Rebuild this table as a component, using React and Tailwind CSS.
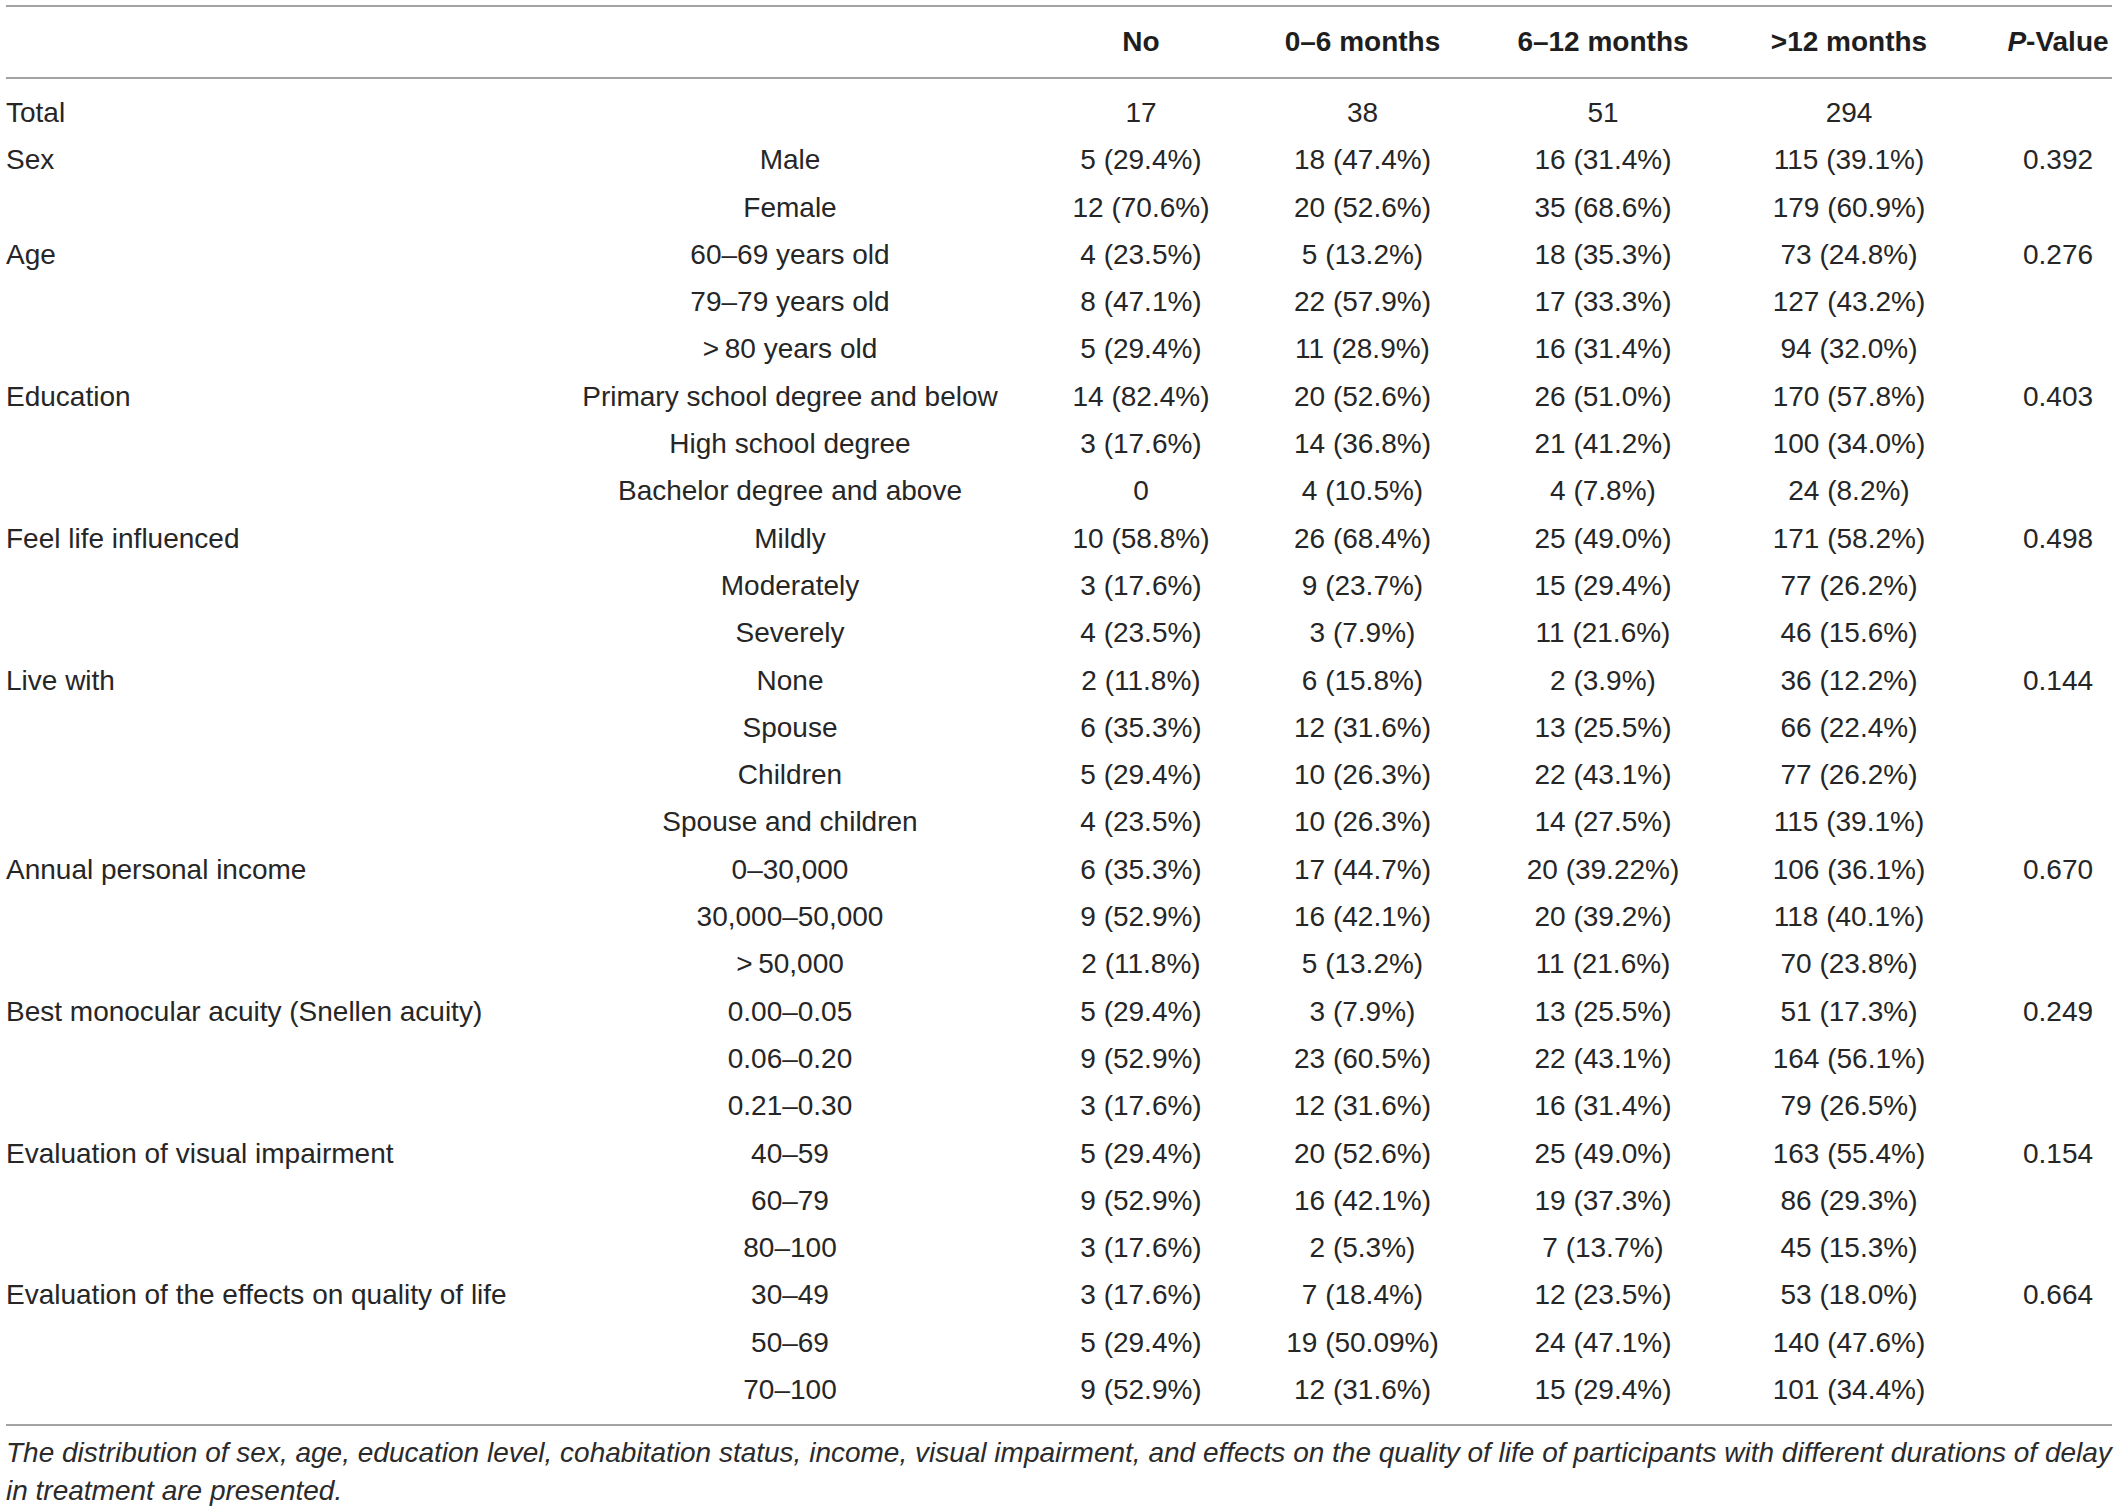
// App.jsx
import React from 'react';

const rows = [
    ['Total', '', '17', '38', '51', '294', ''],
    ['Sex', 'Male', '5 (29.4%)', '18 (47.4%)', '16 (31.4%)', '115 (39.1%)', '0.392'],
    ['', 'Female', '12 (70.6%)', '20 (52.6%)', '35 (68.6%)', '179 (60.9%)', ''],
    ['Age', '60–69 years old', '4 (23.5%)', '5 (13.2%)', '18 (35.3%)', '73 (24.8%)', '0.276'],
    ['', '79–79 years old', '8 (47.1%)', '22 (57.9%)', '17 (33.3%)', '127 (43.2%)', ''],
    ['', '>\u200980 years old', '5 (29.4%)', '11 (28.9%)', '16 (31.4%)', '94 (32.0%)', ''],
    ['Education', 'Primary school degree and below', '14 (82.4%)', '20 (52.6%)', '26 (51.0%)', '170 (57.8%)', '0.403'],
    ['', 'High school degree', '3 (17.6%)', '14 (36.8%)', '21 (41.2%)', '100 (34.0%)', ''],
    ['', 'Bachelor degree and above', '0', '4 (10.5%)', '4 (7.8%)', '24 (8.2%)', ''],
    ['Feel life influenced', 'Mildly', '10 (58.8%)', '26 (68.4%)', '25 (49.0%)', '171 (58.2%)', '0.498'],
    ['', 'Moderately', '3 (17.6%)', '9 (23.7%)', '15 (29.4%)', '77 (26.2%)', ''],
    ['', 'Severely', '4 (23.5%)', '3 (7.9%)', '11 (21.6%)', '46 (15.6%)', ''],
    ['Live with', 'None', '2 (11.8%)', '6 (15.8%)', '2 (3.9%)', '36 (12.2%)', '0.144'],
    ['', 'Spouse', '6 (35.3%)', '12 (31.6%)', '13 (25.5%)', '66 (22.4%)', ''],
    ['', 'Children', '5 (29.4%)', '10 (26.3%)', '22 (43.1%)', '77 (26.2%)', ''],
    ['', 'Spouse and children', '4 (23.5%)', '10 (26.3%)', '14 (27.5%)', '115 (39.1%)', ''],
    ['Annual personal income', '0–30,000', '6 (35.3%)', '17 (44.7%)', '20 (39.22%)', '106 (36.1%)', '0.670'],
    ['', '30,000–50,000', '9 (52.9%)', '16 (42.1%)', '20 (39.2%)', '118 (40.1%)', ''],
    ['', '>\u200950,000', '2 (11.8%)', '5 (13.2%)', '11 (21.6%)', '70 (23.8%)', ''],
    ['Best monocular acuity (Snellen acuity)', '0.00–0.05', '5 (29.4%)', '3 (7.9%)', '13 (25.5%)', '51 (17.3%)', '0.249'],
    ['', '0.06–0.20', '9 (52.9%)', '23 (60.5%)', '22 (43.1%)', '164 (56.1%)', ''],
    ['', '0.21–0.30', '3 (17.6%)', '12 (31.6%)', '16 (31.4%)', '79 (26.5%)', ''],
    ['Evaluation of visual impairment', '40–59', '5 (29.4%)', '20 (52.6%)', '25 (49.0%)', '163 (55.4%)', '0.154'],
    ['', '60–79', '9 (52.9%)', '16 (42.1%)', '19 (37.3%)', '86 (29.3%)', ''],
    ['', '80–100', '3 (17.6%)', '2 (5.3%)', '7 (13.7%)', '45 (15.3%)', ''],
    ['Evaluation of the effects on quality of life', '30–49', '3 (17.6%)', '7 (18.4%)', '12 (23.5%)', '53 (18.0%)', '0.664'],
    ['', '50–69', '5 (29.4%)', '19 (50.09%)', '24 (47.1%)', '140 (47.6%)', ''],
    ['', '70–100', '9 (52.9%)', '12 (31.6%)', '15 (29.4%)', '101 (34.4%)', ''],
];

// column widths picked so the centres land where the figure has them
const cols = 'grid grid-cols-[505px_558px_144px_299px_182px_310px_108px]';

function Cell({ children, left }) {
    return (
        <div className={left ? 'flex items-center whitespace-nowrap' : 'flex items-center justify-center whitespace-nowrap'}>
            {children}
        </div>
    );
}

function App() {
    return (
        <div className="min-h-screen bg-white font-['Liberation_Sans',Arial,sans-serif] text-[28px] text-[#262626]">
            <div className="ml-[6px] w-[2106px] pt-[5px]">
                <div className={`${cols} h-[74px] border-y-2 border-[#a3a3a3] font-bold text-[#1e1e1e]`}>
                    <Cell left></Cell>
                    <Cell></Cell>
                    <Cell>No</Cell>
                    <Cell>0–6 months</Cell>
                    <Cell>6–12 months</Cell>
                    <Cell>&gt;12 months</Cell>
                    <Cell><i>P</i>-Value</Cell>
                </div>

                <div className="pt-[10px] pb-[11px] border-b-2 border-[#a3a3a3]">
                    {rows.map((r, i) => (
                        <div key={i} className={`${cols} h-[47.3px] leading-[47.3px]`}>
                            <Cell left>{r[0]}</Cell>
                            <Cell>{r[1]}</Cell>
                            <Cell>{r[2]}</Cell>
                            <Cell>{r[3]}</Cell>
                            <Cell>{r[4]}</Cell>
                            <Cell>{r[5]}</Cell>
                            <Cell>{r[6]}</Cell>
                        </div>
                    ))}
                </div>

                <p className="pt-[8px] text-[28px] leading-[38px] italic text-[#2b2b2b] whitespace-nowrap">
                    The distribution of sex, age, education level, cohabitation status, income, visual impairment, and effects on the quality of life of participants with different durations of delay
                    <br />
                    in treatment are presented.
                </p>
            </div>
        </div>
    );
}

export default App;
